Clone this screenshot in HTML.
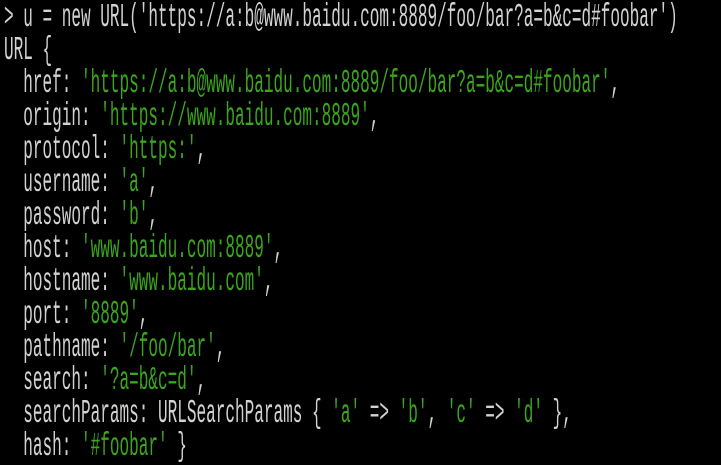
<!DOCTYPE html>
<html><head><style>
html,body{margin:0;padding:0;background:#000;width:721px;height:464px;overflow:hidden}
#t{position:absolute;left:4px;top:1px;width:1500px;transform:scaleX(0.486);transform-origin:0 0;font-family:"Liberation Mono",monospace;font-size:33px;line-height:33px;color:#d2d2d2;white-space:pre}
.g{color:#3aa61c}
</style></head><body><div id="t">&gt; u = new URL('https://a:b@www.baidu.com:8889/foo/bar?a=b&amp;c=d#foobar')
URL {
  href: <span class="g">'https://a:b@www.baidu.com:8889/foo/bar?a=b&amp;c=d#foobar'</span>,
  origin: <span class="g">'https://www.baidu.com:8889'</span>,
  protocol: <span class="g">'https:'</span>,
  username: <span class="g">'a'</span>,
  password: <span class="g">'b'</span>,
  host: <span class="g">'www.baidu.com:8889'</span>,
  hostname: <span class="g">'www.baidu.com'</span>,
  port: <span class="g">'8889'</span>,
  pathname: <span class="g">'/foo/bar'</span>,
  search: <span class="g">'?a=b&amp;c=d'</span>,
  searchParams: URLSearchParams { <span class="g">'a'</span> =&gt; <span class="g">'b'</span>, <span class="g">'c'</span> =&gt; <span class="g">'d'</span> },
  hash: <span class="g">'#foobar'</span> }</div></body></html>
